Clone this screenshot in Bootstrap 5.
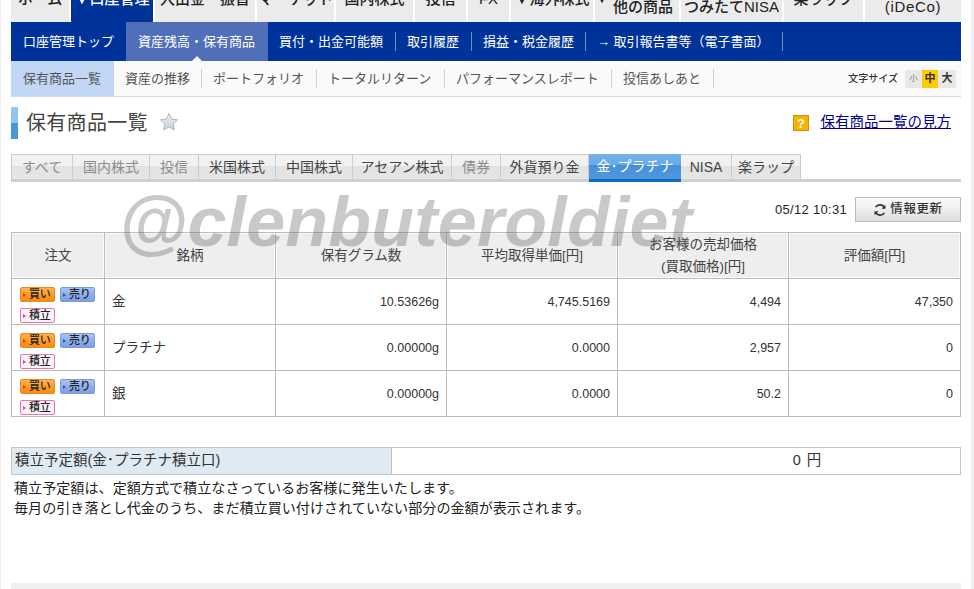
<!DOCTYPE html>
<html lang="ja">
<head>
<meta charset="utf-8">
<title>保有商品一覧</title>
<link href="https://cdn.jsdelivr.net/npm/bootstrap@5.3.0/dist/css/bootstrap.min.css" rel="stylesheet">
<style>
html,body{height:589px;overflow:hidden;background:#f0f0f0}
body{font-family:"Liberation Sans","Noto Sans CJK JP",sans-serif;font-size:14px;color:#333;line-height:1.2}
.page-frame{position:relative;width:971px;height:589px;padding:0 10px;border-left:1px solid #eee;background:#fff;overflow:hidden}
.top-tabs{height:22px;gap:2px;overflow:hidden;width:950px}
.top-tab{background:#ebebeb;color:#222;font-size:15px;height:22px;text-align:center;display:flex;align-items:flex-end;justify-content:center;line-height:17px;flex:none;white-space:nowrap;font-weight:500}
.top-tab>span{display:block;transform:translateY(-15px)}
.top-tab>span.two{transform:translateY(-7px)}
.top-tab.cur{background:#003399;color:#fff}
.arrow-up{display:inline-block;transform:translate(-5px,-9px);font-size:12px;line-height:1}
.wide-txt{letter-spacing:.7px}
.w58{width:58px}.w82{width:82px}.w100{width:100px}.w77{width:77px}.w51{width:51px}.w41{width:41px}.w84{width:84px}.w101{width:101px}.w79{width:79px}.w96{width:96px}
.nav-main{height:39px;background:#003399;width:950px;color:#fff;font-size:13px}
.nav-main a{color:#fff;text-decoration:none;display:flex;align-items:center;height:39px;white-space:nowrap}
.nav-main .on{background:#4f6fb8;position:relative}
.nav-main .on::after{content:"";position:absolute;left:50%;margin-left:-5px;bottom:0;border:5px solid transparent;border-top:0;border-bottom-color:#fafafa}
.sepm{position:relative}
.sepm::after{content:"";position:absolute;right:0;top:10px;height:19px;width:1px;background:#6f8cc4}
.nav-sub{height:36px;background:#fafafa;border-bottom:1px solid #d3dae3;width:950px;font-size:13px;color:#555}
.nav-sub a{color:#555;text-decoration:none;display:flex;align-items:center;height:35px;white-space:nowrap;position:relative}
.nav-sub .sepm::after{top:8px;height:19px;background:#c9d3e0}
.nav-sub .on{background:#c2d6f6}
.size-label{font-size:10px;color:#333;font-weight:500;margin-right:7px}
.size-box{display:flex;height:18px;margin-right:5px}
.size-box span{width:18px;display:flex;align-items:center;justify-content:center;background:#e8e8e8;font-size:11px;line-height:1;font-weight:700;color:#333}
.size-box .s{width:17px;font-size:8px;font-weight:400;color:#777}
.size-box .m{background:#ffcc00;width:16px}
.title-row{height:32px;margin-top:10px;width:950px}
.title-bar{width:7px;height:32px;background:linear-gradient(#95c9f3 0,#8cc3f0 50%,#4a98dc 51%,#4a98dc 100%)}
.title-text{font-size:20px;color:#444;margin-left:8px;letter-spacing:.3px;line-height:32px}
.star-ico{margin-left:11px;margin-top:-2px}
.howto{font-size:14.5px;color:#000099;text-decoration:underline;margin-right:10px;margin-left:4px}
.sub-tabs{margin-top:15px;height:28px;border-bottom:3px solid #d0d0d0;width:950px}
.sub-tab{height:25px;background:linear-gradient(#f3f3f3 0,#f0f0f0 45%,#e2e2e2 46%,#e6e6e6 100%);border:1px solid #ccc;border-left:0;border-bottom:0;font-size:14px;color:#444;display:flex;align-items:center;justify-content:center;white-space:nowrap}
.sub-tab.first{border-left:1px solid #ccc}
.sub-tab.dim{color:#8c8c8c}
.sub-tab.act{background:linear-gradient(#74b2ea 0,#6aaae6 45%,#4790d8 46%,#5098de 100%);color:#fff;border:0;border-bottom:3px solid #0d6cc0;margin-bottom:-3px;height:28px}
.refresh-row{width:950px;height:25px;margin-top:15px}
.stamp{font-size:13px;color:#222;margin-right:8px;letter-spacing:.3px}
.refresh-btn{width:106px;height:25px;border:1px solid #bbb;border-radius:0;background:linear-gradient(#fafafa 0,#f0f0f0 45%,#dcdcdc 100%);font-size:12.5px;letter-spacing:.6px;color:#333;font-weight:500;display:flex;align-items:center;justify-content:center;gap:3px;padding:0}
.tbl-main{width:950px;border-collapse:collapse;table-layout:fixed;margin-top:10px;font-size:13.5px;color:#333}
.tbl-main th,.tbl-main td{border:1px solid #bbb;padding:0 7px;vertical-align:middle}
.tbl-main th{height:46px;background:#eee;font-weight:400;text-align:center;color:#444;line-height:22px;box-shadow:inset 0 0 0 1px #fafafa}
.tbl-main td{height:46px;padding-top:2px}
.num{text-align:right;font-size:12.5px}
.order-btns{display:flex;flex-wrap:wrap;column-gap:5px;row-gap:6px;margin-left:1px;margin-top:5px}
.pill{width:35px;height:15px;border-radius:2px;font-size:11px;line-height:13px;color:#222;font-weight:500;display:flex;align-items:center;padding-left:2px;white-space:nowrap;letter-spacing:-.2px}
.pill::before{content:"";border:2px solid transparent;border-left:3px solid currentColor;border-right:0;margin-right:3px;flex:none}
.pill.buy{background:linear-gradient(#ffb050 0,#ff9c2a 50%,#fb8a10 100%);border:1px solid #e88a20}
.pill.buy::before{border-left-color:#c4490c}
.pill.sell{background:linear-gradient(#a9c4f4 0,#8fb0ee 50%,#7b9ee6 100%);border:1px solid #7a9ae0}
.pill.sell::before{border-left-color:#2f55b0}
.pill.plan{background:#fdf2f8;border:1px solid #e878a8}
.pill.plan::before{border-left-color:#e0408a}
.tbl-plan{width:950px;border-collapse:collapse;table-layout:fixed;margin-top:30px;font-size:14.5px}
.tbl-plan td{border:1px solid #c4c4c4;height:27px;padding:0 3px}
.tbl-plan .lab{background:#e0eaf2;width:380px;color:#333}
.tbl-plan .val{text-align:center;color:#333;letter-spacing:1px;padding-left:266px}
.note{margin:4px 0 0 3px;font-size:14.1px;line-height:19.5px;color:#222}
.foot-bar{position:absolute;left:10px;bottom:0;width:950px;height:6px;background:#f0f0f0}
.mark-text{position:absolute;left:118px;top:182px;font:italic 700 70px/80px "Liberation Sans",sans-serif;color:rgba(90,90,90,.33);white-space:nowrap;pointer-events:none;letter-spacing:.2px}
</style>
</head>
<body>
<div class="page-frame">
  <div class="top-tabs d-flex">
    <div class="top-tab w58"><span>ホーム</span></div>
    <div class="top-tab w82 cur"><span>▼口座管理</span></div>
    <div class="top-tab w100"><span>入出金・振替</span></div>
    <div class="top-tab w77"><span>マーケット</span></div>
    <div class="top-tab w77"><span>国内株式</span></div>
    <div class="top-tab w51"><span>投信</span></div>
    <div class="top-tab w41"><span>FX</span></div>
    <div class="top-tab w82"><span>▼海外株式</span></div>
    <div class="top-tab w84"><span class="two"><i class="arrow-up fst-normal">▼</i>他の商品</span></div>
    <div class="top-tab w101"><span class="two">つみたてNISA</span></div>
    <div class="top-tab w79"><span>楽ラップ</span></div>
    <div class="top-tab w96"><span class="two wide-txt">(iDeCo)</span></div>
  </div>
  <div class="nav-main d-flex">
    <a href="#" style="width:115px;padding-left:12px">口座管理トップ</a>
    <a href="#" class="on" style="width:142px;padding-left:12px">資産残高・保有商品</a>
    <a href="#" class="sepm" style="width:128px;padding-left:11px">買付・出金可能額</a>
    <a href="#" class="sepm" style="width:76px;padding-left:11px">取引履歴</a>
    <a href="#" class="sepm" style="width:114px;padding-left:11px">損益・税金履歴</a>
    <a href="#" class="sepm" style="width:197px;padding-left:11px">→ 取引報告書等（電子書面）</a>
  </div>
  <div class="nav-sub d-flex">
    <a href="#" class="on" style="width:103px;padding-left:12px">保有商品一覧</a>
    <a href="#" class="sepm" style="width:88px;padding-left:11px">資産の推移</a>
    <a href="#" class="sepm" style="width:115px;padding-left:11px">ポートフォリオ</a>
    <a href="#" class="sepm" style="width:128px;padding-left:11px">トータルリターン</a>
    <a href="#" class="sepm" style="width:167px;padding-left:11px">パフォーマンスレポート</a>
    <a href="#" class="sepm" style="width:102px;padding-left:11px">投信あしあと</a>
    <div class="ms-auto d-flex align-items-center"><span class="size-label">文字サイズ</span>
      <div class="size-box"><span class="s">小</span><span class="m">中</span><span>大</span></div></div>
  </div>
  <div class="title-row d-flex align-items-center">
    <div class="title-bar"></div>
    <div class="title-text">保有商品一覧</div>
    <svg class="star-ico" width="20" height="20" viewBox="0 0 20 20"><defs><linearGradient id="starfill" x1="0" y1="0" x2="0" y2="1"><stop offset="0" stop-color="#eef1f4"/><stop offset="1" stop-color="#c6d2dc"/></linearGradient></defs><path d="M10 1.5l2.6 5.6 6 .7-4.5 4.1 1.2 6-5.3-3-5.3 3 1.2-6L1.4 7.8l6-.7z" fill="url(#starfill)" stroke="#aeb8c2" stroke-width="1"/></svg>
    <div class="ms-auto d-flex align-items-center">
      <svg width="16" height="16" viewBox="0 0 16 16" class="me-2"><rect x=".5" y=".5" width="15" height="15" fill="#f5b400" stroke="#d98a10"/><text x="8" y="13" text-anchor="middle" font-family="Liberation Sans" font-weight="700" font-size="13" fill="#fff">?</text></svg>
      <a href="#" class="howto">保有商品一覧の見方</a>
    </div>
  </div>
  <div class="sub-tabs d-flex">
    <div class="sub-tab first dim" style="width:62px">すべて</div>
    <div class="sub-tab dim" style="width:77px">国内株式</div>
    <div class="sub-tab dim" style="width:49px">投信</div>
    <div class="sub-tab" style="width:77px">米国株式</div>
    <div class="sub-tab" style="width:77px">中国株式</div>
    <div class="sub-tab" style="width:99px">アセアン株式</div>
    <div class="sub-tab dim" style="width:49px">債券</div>
    <div class="sub-tab" style="width:88px">外貨預り金</div>
    <div class="sub-tab act" style="width:92px">金･プラチナ</div>
    <div class="sub-tab" style="width:51px">NISA</div>
    <div class="sub-tab" style="width:69px">楽ラップ</div>
  </div>
  <div class="refresh-row d-flex align-items-center justify-content-end">
    <span class="stamp">05/12 10:31</span>
    <button type="button" class="btn refresh-btn">
      <svg width="14" height="14" viewBox="0 0 14 14"><path d="M11.5 5A5 5 0 0 0 2.6 4.2M2.5 9a5 5 0 0 0 8.9.8" fill="none" stroke="#333" stroke-width="1.6"/><path d="M12.5 1.8v4h-4zM1.5 12.2v-4h4z" fill="#333"/></svg>情報更新</button>
  </div>
  <table class="tbl-main">
    <colgroup><col style="width:93px"><col style="width:171px"><col style="width:171px"><col style="width:171px"><col style="width:171px"><col style="width:172px"></colgroup>
    <thead><tr><th>注文</th><th>銘柄</th><th>保有グラム数</th><th>平均取得単価[円]</th><th>お客様の売却価格<br>(買取価格)[円]</th><th>評価額[円]</th></tr></thead>
    <tbody>
      <tr><td><div class="order-btns"><span class="pill buy">買い</span><span class="pill sell">売り</span><span class="pill plan">積立</span></div></td><td>金</td><td class="num">10.53626g</td><td class="num">4,745.5169</td><td class="num">4,494</td><td class="num">47,350</td></tr>
      <tr><td><div class="order-btns"><span class="pill buy">買い</span><span class="pill sell">売り</span><span class="pill plan">積立</span></div></td><td>プラチナ</td><td class="num">0.00000g</td><td class="num">0.0000</td><td class="num">2,957</td><td class="num">0</td></tr>
      <tr><td><div class="order-btns"><span class="pill buy">買い</span><span class="pill sell">売り</span><span class="pill plan">積立</span></div></td><td>銀</td><td class="num">0.00000g</td><td class="num">0.0000</td><td class="num">50.2</td><td class="num">0</td></tr>
    </tbody>
  </table>
  <table class="tbl-plan">
    <tr><td class="lab">積立予定額(金･プラチナ積立口)</td><td class="val">0 円</td></tr>
  </table>
  <p class="note">積立予定額は、定額方式で積立なさっているお客様に発生いたします。<br>毎月の引き落とし代金のうち、まだ積立買い付けされていない部分の金額が表示されます。</p>
  <div class="foot-bar"></div>
  <div class="mark-text">@clenbuteroldiet</div>
</div>
</body>
</html>
